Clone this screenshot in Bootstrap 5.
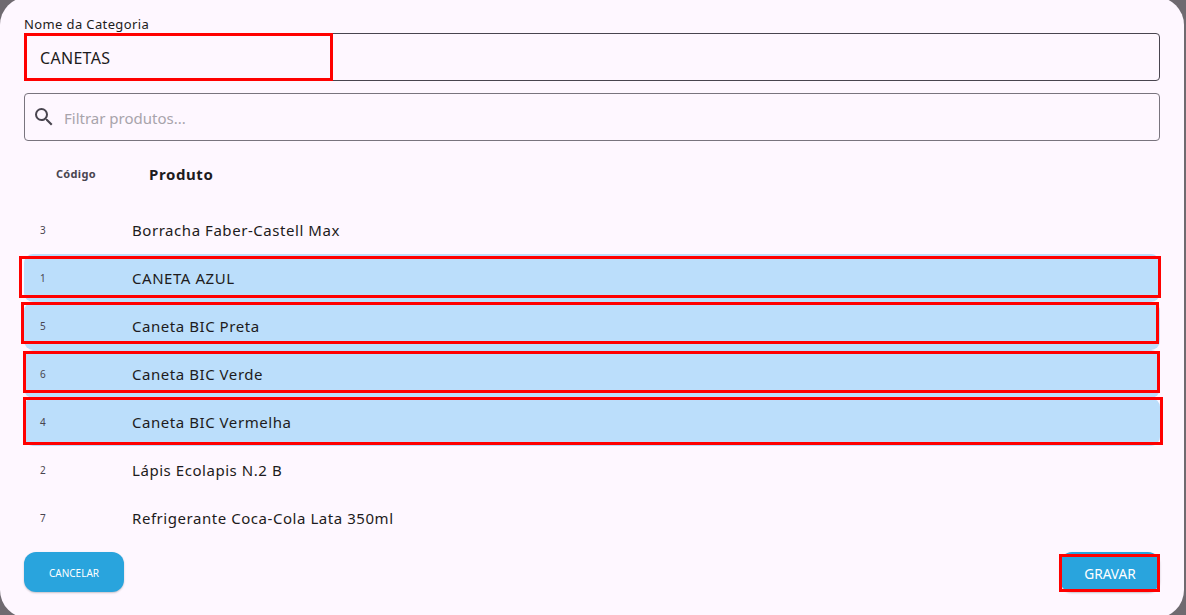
<!DOCTYPE html>
<html lang="pt">
<head>
<meta charset="utf-8">
<title>Categoria</title>
<link rel="stylesheet" href="https://cdn.jsdelivr.net/npm/bootstrap@5.3.0/dist/css/bootstrap.min.css">
<style>
html,body{height:615px;overflow:hidden;background:#6f6a70;}
body{font-family:"Noto Sans","Open Sans",sans-serif;color:#1d1b20;}
.sheet{width:1184px;height:621px;margin-top:-3px;padding:18px 24px 0;background:#fef7ff;border-radius:28px;position:relative;}
.fld-label{font-size:13px;line-height:18px;letter-spacing:.38px;height:18px;color:#1d1b20;}
.fld-name,.fld-search{height:48px;flex:none;background:#fef7ff;border-radius:4px;color:#1d1b20;box-shadow:none;}
.fld-name{border:1px solid #49454f;padding:1px 15px 0;font-size:16px;letter-spacing:.3px;}
.fld-search{border:1px solid #79747e;margin-top:12px;padding:0 7px;gap:8px;}
.fld-search input{border:0;outline:0;background:transparent;flex:1;padding:2px 0 0;font-size:15px;color:#1d1b20;font-family:inherit;}
.fld-search input::placeholder{color:#a8a4ab;opacity:1;}
.fld-name:focus{background:#fef7ff;border-color:#49454f;box-shadow:none;}
.head-row{height:65px;flex:none;padding-top:1px;}
.col-code{width:108px;flex:none;}
.head-code{font-size:11px;font-weight:700;color:#49454f;letter-spacing:.3px;padding-left:32px;}
.head-name{font-size:15px;font-weight:700;letter-spacing:.6px;padding-left:17px;color:#1d1b20;}
.prod-row{height:48px;flex:none;position:relative;border-radius:9px;}
.prod-row.picked{background:#bbdefb;}
.row-code{font-size:10px;color:#49454f;padding-left:16px;}
.row-name{font-size:15px;letter-spacing:.55px;color:#1d1b20;}
.foot-row{margin-top:10px;}
.act-btn{width:100px;height:40px;border:0;background:#29a4dd;color:#fff;border-radius:12px;box-shadow:0 1px 2px rgba(0,0,0,.22);padding:3px 0 0;}
.act-btn:hover,.act-btn:active{background:#29a4dd;color:#fff;}
.act-small{font-size:10px;}
.act-large{font-size:13.7px;position:relative;padding-top:4px;}
.red-mark{position:absolute;border:3px solid #f00;pointer-events:none;}
.rm-name{left:24px;top:36px;width:309px;height:48px;}
.rm-1{left:-5px;top:2px;width:1142px;height:42px;}
.rm-2{left:-3px;top:0;width:1138px;height:42px;}
.rm-3{left:-1px;top:1px;width:1137px;height:42px;}
.rm-4{left:-1px;top:-1px;width:1140px;height:48px;}
.rm-go{left:-1px;top:2px;width:101px;height:38px;}
</style>
</head>
<body>
<div class="sheet d-flex flex-column">
  <div class="fld-label">Nome da Categoria</div>
  <input class="form-control fld-name" value="CANETAS" aria-label="Nome da Categoria">
  <div class="red-mark rm-name"></div>
  <div class="d-flex align-items-center fld-search">
    <svg width="24" height="24" viewBox="0 0 24 24" aria-hidden="true"><path fill="#49454f" d="M15.5 14h-.79l-.28-.27A6.47 6.47 0 0 0 16 9.5 6.5 6.5 0 1 0 9.5 16c1.61 0 3.09-.59 4.23-1.57l.27.28v.79l5 4.99L20.49 19l-4.99-5zm-6 0C7.01 14 5 11.99 5 9.5S7.01 5 9.5 5 14 7.01 14 9.5 11.99 14 9.5 14z"/></svg>
    <input type="text" placeholder="Filtrar produtos..." aria-label="Filtrar produtos">
  </div>
  <div class="d-flex align-items-center head-row">
    <div class="col-code head-code">Código</div>
    <div class="head-name">Produto</div>
  </div>
  <div class="d-flex align-items-center prod-row"><div class="col-code row-code">3</div><div class="row-name">Borracha Faber-Castell Max</div></div>
  <div class="d-flex align-items-center prod-row picked"><div class="col-code row-code">1</div><div class="row-name">CANETA AZUL</div><div class="red-mark rm-1"></div></div>
  <div class="d-flex align-items-center prod-row picked"><div class="col-code row-code">5</div><div class="row-name">Caneta BIC Preta</div><div class="red-mark rm-2"></div></div>
  <div class="d-flex align-items-center prod-row picked"><div class="col-code row-code">6</div><div class="row-name">Caneta BIC Verde</div><div class="red-mark rm-3"></div></div>
  <div class="d-flex align-items-center prod-row picked"><div class="col-code row-code">4</div><div class="row-name">Caneta BIC Vermelha</div><div class="red-mark rm-4"></div></div>
  <div class="d-flex align-items-center prod-row"><div class="col-code row-code">2</div><div class="row-name">Lápis Ecolapis N.2 B</div></div>
  <div class="d-flex align-items-center prod-row"><div class="col-code row-code">7</div><div class="row-name">Refrigerante Coca-Cola Lata 350ml</div></div>
  <div class="d-flex justify-content-between foot-row">
    <button type="button" class="btn act-btn act-small">CANCELAR</button>
    <button type="button" class="btn act-btn act-large">GRAVAR<span class="red-mark rm-go"></span></button>
  </div>
</div>
<script src="https://cdn.jsdelivr.net/npm/bootstrap@5.3.0/dist/js/bootstrap.bundle.min.js"></script>
</body>
</html>
